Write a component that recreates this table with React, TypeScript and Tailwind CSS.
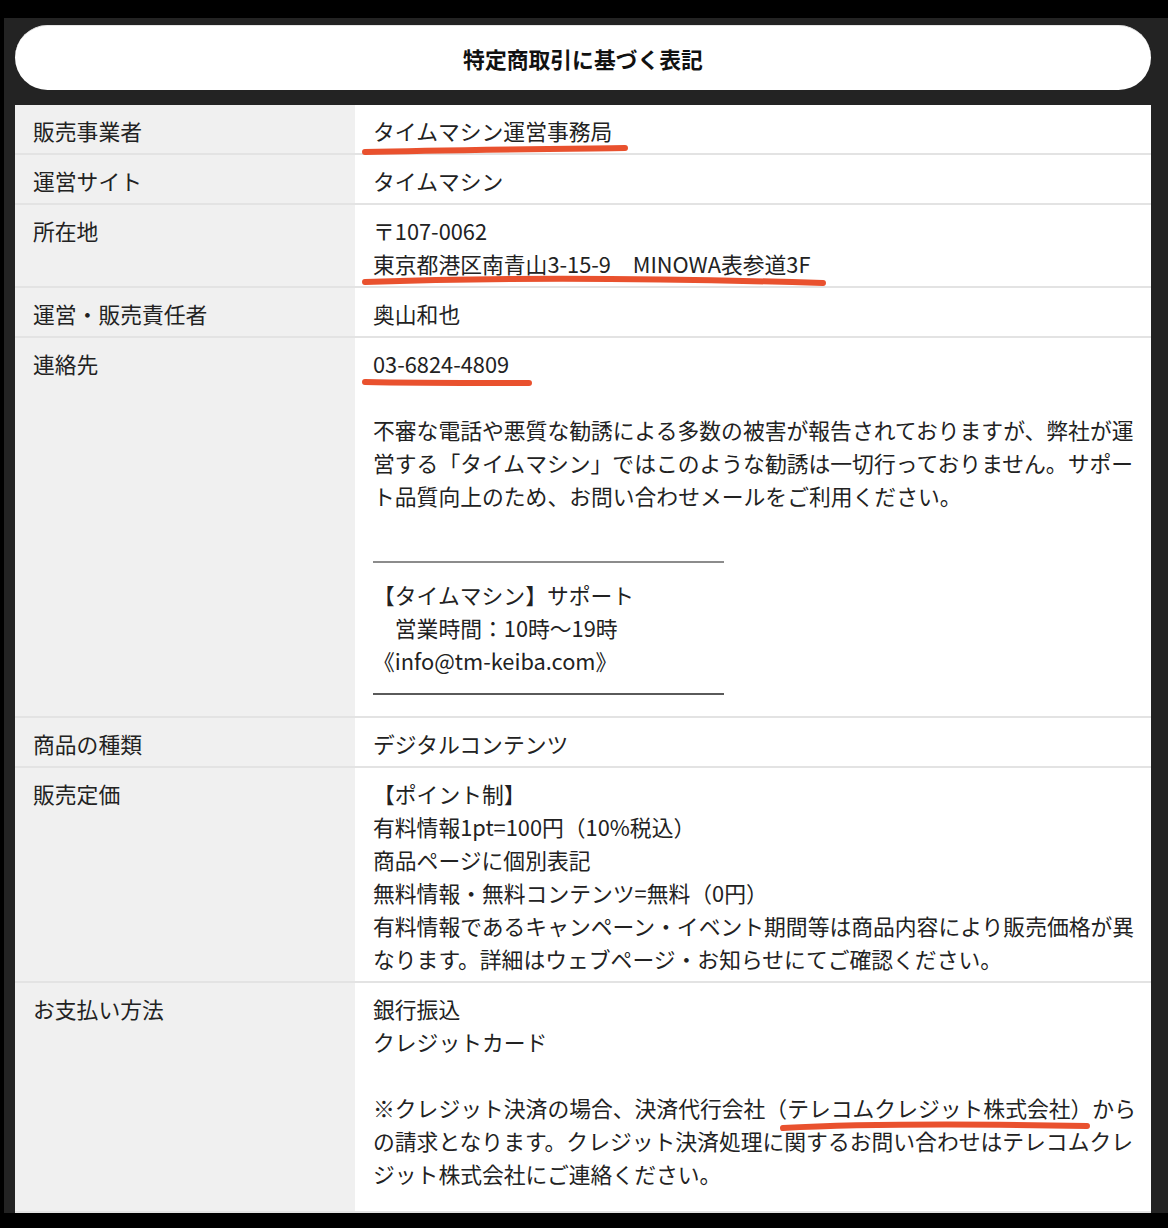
import type { ReactNode } from 'react';

// Hand-drawn style red underline, sized in px so the stroke keeps its width
function Scribble({ w, d, left, top }: { w: number; d: string; left: number; top: number }) {
  return (
    <svg
      width={w}
      height={14}
      viewBox={`0 0 ${w} 14`}
      className="absolute pointer-events-none"
      style={{ left, top }}
    >
      <path d={d} fill="none" stroke="#e9512e" strokeWidth={6} strokeLinecap="round" strokeLinejoin="round" />
    </svg>
  );
}

function Row({ label, children, grow }: { label: string; children: ReactNode; grow?: boolean }) {
  return (
    <div className={`grid grid-cols-[340px_796px] border-b-2 border-[#e3e3e3] ${grow ? 'flex-1' : ''}`}>
      <div className="bg-[#f0f0f0] pl-[18px] pt-[9px] pb-[6px]">{label}</div>
      <div className="bg-white pl-[18px] pr-[12px] pt-[9px] pb-[6px]">{children}</div>
    </div>
  );
}

const Divider = ({ dark }: { dark?: boolean }) => (
  <div className="h-[33px] flex items-center">
    <div className={`w-[351px] h-[2px] ${dark ? 'bg-[#5a5a5a]' : 'bg-[#8c8c8c]'}`} />
  </div>
);

const Blank = () => <div className="h-[33px]" />;

export default function App() {
  return (
    <div className="w-[1168px] h-[1228px] bg-black overflow-hidden pt-[18px] font-['Noto_Sans_CJK_JP','Noto_Sans',sans-serif] text-[21.8px] leading-[33px] text-[#222]">
      <div className="h-[1195px] bg-[#232323] border-l-[4px] border-black pl-[11px] pr-[17px] pt-[7px] flex flex-col">
        {/* Header pill */}
        <div className="h-[65px] bg-white rounded-full border-t border-[#e6e6e6] flex items-center justify-center">
          <h1 className="font-bold text-[#111] text-[21.8px]">特定商取引に基づく表記</h1>
        </div>

        {/* Table */}
        <div className="mt-[15px] flex-1 flex flex-col bg-white">
          <Row label="販売事業者">
            <span className="relative inline-block">
              タイムマシン運営事務局
              <Scribble w={268} left={-12} top={29} d="M4 9 C 80 7, 180 6, 264 5" />
            </span>
          </Row>

          <Row label="運営サイト">タイムマシン</Row>

          <Row label="所在地">
            <div>〒107-0062</div>
            <span className="relative inline-block">
              東京都港区南青山3-15-9　MINOWA表参道3F
              <Scribble w={466} left={-12} top={27} d="M4 8 C 120 4, 260 3, 462 9" />
            </span>
          </Row>

          <Row label="運営・販売責任者">奥山和也</Row>

          <Row label="連絡先">
            <span className="relative inline-block">
              03-6824-4809
              <Scribble w={172} left={-12} top={27} d="M4 8 C 50 9, 110 9, 168 9" />
            </span>
            <Blank />
            <p>
              不審な電話や悪質な勧誘による多数の被害が報告されておりますが、弊社が運営する「タイムマシン」ではこのような勧誘は一切行っておりません。サポート品質向上のため、お問い合わせメールをご利用ください。
            </p>
            <Blank />
            <Divider />
            <div>【タイムマシン】サポート</div>
            <div>　営業時間：10時〜19時</div>
            <div>《info@tm-keiba.com》</div>
            <Divider dark />
          </Row>

          <Row label="商品の種類">デジタルコンテンツ</Row>

          <Row label="販売定価">
            <div>【ポイント制】</div>
            <div>有料情報1pt=100円（10%税込）</div>
            <div>商品ページに個別表記</div>
            <div>無料情報・無料コンテンツ=無料（0円）</div>
            <p>有料情報であるキャンペーン・イベント期間等は商品内容により販売価格が異なります。詳細はウェブページ・お知らせにてご確認ください。</p>
          </Row>

          <Row label="お支払い方法" grow>
            <div>銀行振込</div>
            <div>クレジットカード</div>
            <Blank />
            <p>
              ※クレジット決済の場合、決済代行会社
              <span className="relative inline-block">
                （テレコムクレジット株式会社）
                <Scribble w={312} left={14} top={28} d="M4 9 C 80 5, 200 5, 308 7" />
              </span>
              からの請求となります。クレジット決済処理に関するお問い合わせはテレコムクレジット株式会社にご連絡ください。
            </p>
          </Row>
        </div>
      </div>
    </div>
  );
}
